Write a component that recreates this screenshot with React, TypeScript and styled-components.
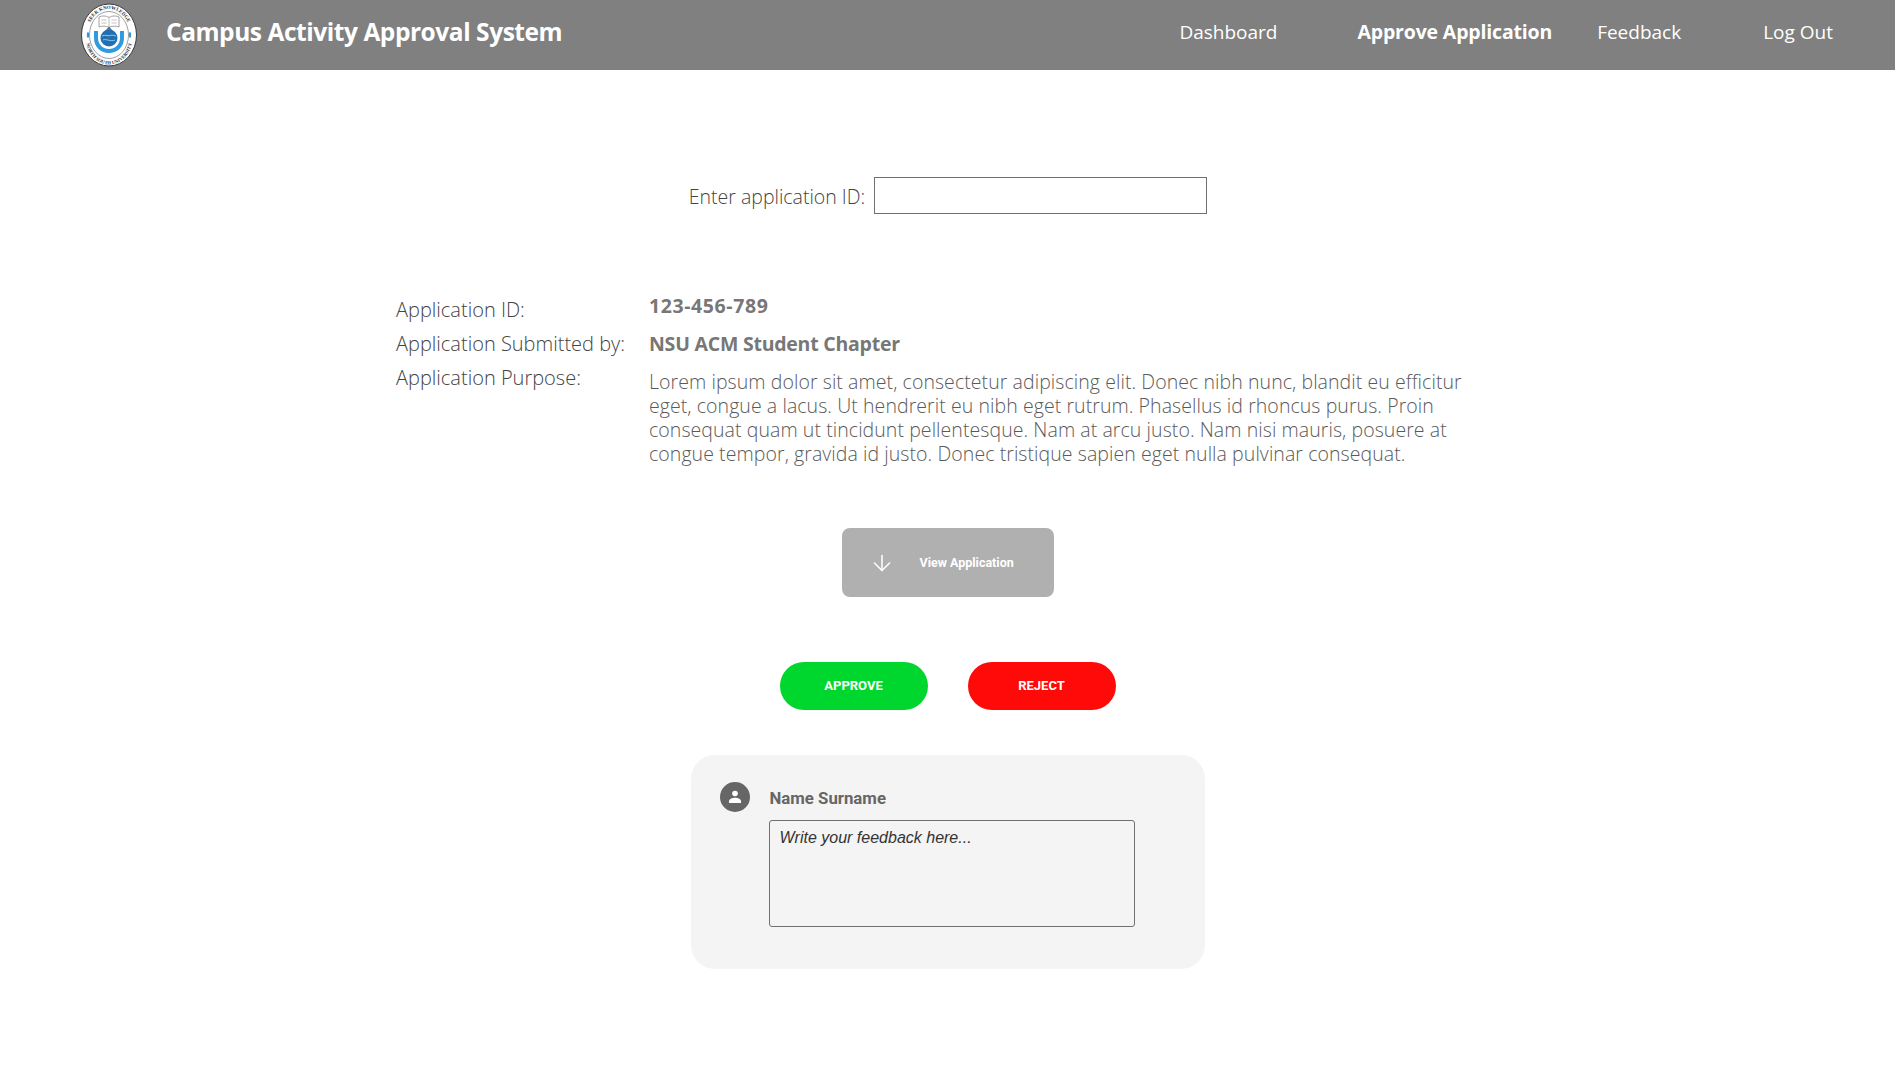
import React from "react";
import styled, { createGlobalStyle } from "styled-components";
import { ArrowDown } from "lucide-react";

const Global = createGlobalStyle`
  html, body { margin: 0; padding: 0; background: #fff; }
  * { box-sizing: border-box; }
  body { font-family: "Open Sans", "Noto Sans", sans-serif; }
`;
const Page = styled.div`
  min-height: 1066px;
  display: flex;
  flex-direction: column;
`;
const Header = styled.header`
  height: 70px;
  background: #808080;
  display: flex;
  align-items: center;
  padding-left: 81px;
  color: #fff;
`;
const Logo = styled.svg`
  width: 56px;
  height: 64px;
  flex: none;
`;
const Title = styled.h1`
  margin: -7px 0 0 29px;
  font-size: 24.5px;
  font-weight: 700;
  letter-spacing: -0.45px;
  white-space: nowrap;
`;
const Nav = styled.nav`
  margin-left: auto;
  margin-right: 62px;
  margin-top: -7px;
  display: flex;
  align-items: center;
`;
const NavLink = styled.a<{ $before: number; $active?: boolean }>`
  margin-left: ${(p) => p.$before}px;
  font-size: ${(p) => (p.$active ? "19.5px" : "19px")};
  font-weight: ${(p) => (p.$active ? 700 : 400)};
  letter-spacing: ${(p) => (p.$active ? "-0.17px" : "0")};
  white-space: nowrap;
  color: #fff;
`;
const Main = styled.main`
  display: flex;
  flex-direction: column;
  align-items: center;
`;
const SearchRow = styled.div`
  margin-top: 107px;
  margin-left: 1px;
  display: flex;
  align-items: center;
  gap: 9px;
`;
const Label = styled.label`
  padding-top: 2px;
  font-size: 19.5px;
  font-weight: 300;
  color: #444;
  white-space: nowrap;
`;
const IdInput = styled.input`
  width: 333px;
  height: 37px;
  border: 1px solid #707070;
  background: #fff;
  outline: none;
`;
const Details = styled.section`
  width: 1103px;
  margin-top: 79px;
  display: grid;
  grid-template-columns: 253px 830px;
  grid-auto-rows: auto;
`;
const RowLabel = styled.div<{ $top: number }>`
  font-size: 20px;
  font-weight: 300;
  line-height: 34px;
  height: 34px;
  color: #444;
  white-space: nowrap;
  margin-top: ${(p) => p.$top}px;
`;
const RowValue = styled.div<{ $top: number; $spacing: number }>`
  font-size: 19.5px;
  font-weight: 700;
  letter-spacing: ${(p) => p.$spacing}px;
  line-height: 34px;
  height: 34px;
  color: #777;
  margin-top: ${(p) => p.$top}px;
`;
const Purpose = styled.p`
  margin: 9px 0 0;
  font-size: 19.5px;
  font-weight: 300;
  letter-spacing: 0.07px;
  line-height: 24px;
  color: #5a5a5a;
`;
const ViewButton = styled.button`
  width: 212px;
  height: 69px;
  margin-top: 62px;
  border: 0;
  border-radius: 8px;
  background: #b0b0b0;
  color: #fff;
  display: flex;
  align-items: center;
  padding: 0 0 0 27px;
  font-family: Roboto, sans-serif;
  font-size: 12.5px;
  font-weight: 700;
  svg { flex: none; }
  span { margin-left: 25px; }
`;
const Actions = styled.div`
  margin-top: 65px;
  display: flex;
  gap: 40px;
`;
const Pill = styled.button<{ $bg: string }>`
  width: 148px;
  height: 48px;
  border: 0;
  border-radius: 24px;
  background: ${(p) => p.$bg};
  color: #fff;
  font-family: Roboto, sans-serif;
  font-size: 13px;
  font-weight: 700;
  padding-bottom: 2px;
`;
const Card = styled.section`
  width: 514px;
  height: 214px;
  margin-top: 45px;
  border-radius: 24px;
  background: #f4f4f4;
  padding: 27px 0 0 29px;
  display: grid;
  grid-template-columns: 30px 366px;
  column-gap: 19px;
  grid-template-rows: 30px auto;
  row-gap: 8px;
`;
const Avatar = styled.div`
  width: 30px;
  height: 30px;
  border-radius: 50%;
  background: #666;
  display: flex;
  align-items: center;
  justify-content: center;
`;
const Name = styled.div`
  font-family: Roboto, sans-serif;
  font-size: 16.8px;
  font-weight: 700;
  color: #666;
  line-height: 32px;
  padding-left: 1px;
`;
const Feedback = styled.textarea`
  grid-column: 2;
  width: 366px;
  height: 107px;
  border: 1px solid #707070;
  border-radius: 3px;
  background: transparent;
  padding: 8px 9px 8px 10px;
  font-family: "Liberation Sans", Arial, sans-serif;
  font-style: italic;
  font-size: 16px;
  line-height: 18px;
  resize: none;
  outline: none;
  &::placeholder { color: #333; opacity: 1; }
`;

function UniversityLogo() {
  return (
    <Logo viewBox="0 0 56 64" aria-hidden="true">
      <defs>
        <path id="ringTop" d="M6.5 32 A21.5 26 0 0 1 49.5 32" />
        <path id="ringBottom" d="M4.5 34 A23.5 27.5 0 0 0 51.5 34" />
      </defs>
      <ellipse cx="28" cy="32" rx="27.5" ry="31" fill="#fff" stroke="#3a3a3a" strokeWidth="1" />
      <ellipse cx="28" cy="32" rx="19.5" ry="23.5" fill="#fff" stroke="#777" strokeWidth="0.7" />
      <text fontFamily="Liberation Serif, serif" fontSize="5" fontWeight="700" fill="#333">
        <textPath href="#ringTop" startOffset="50%" textAnchor="middle">SEEK KNOWLEDGE</textPath>
      </text>
      <text fontFamily="Liberation Serif, serif" fontSize="4.8" fontWeight="700" fill="#333">
        <textPath href="#ringBottom" startOffset="50%" textAnchor="middle">NORTH SOUTH UNIVERSITY</textPath>
      </text>
      <path d="M18 14 C21 12.5 25 12.5 28 14.500 C31 12.5 35 12.5 38 14 V24 C35 22.800 31 22.800 28 24.500 C25 22.800 21 22.800 18 24 Z" fill="#fff" stroke="#9a9a9a" strokeWidth="0.9" />
      <path d="M28 14.500 V24.500 M20.500 17 H25.500 M20.500 20 H25.500 M30.500 17 H35.500 M30.500 20 H35.500" stroke="#aaa" strokeWidth="0.7" />
      <path d="M13 28 V35 C13 44 20 50 28 50 C36 50 43 44 43 35 V28 H39 V35 C39 41.500 34 46 28 46 C22 46 17 41.500 17 35 V28 Z" fill="#2d9be0" />
      <circle cx="28" cy="35" r="8.500" fill="#1f6fb2" />
      <path d="M21 33 C25 31 27 34 31 32 L35 33 M22 37 C25 35.500 30 39 34 37" stroke="#9fd0ee" strokeWidth="0.9" fill="none" />
      <path d="M25 27 L28 23.500 L31 27 Z" fill="#58708a" />
      <ellipse cx="7" cy="32" rx="1.200" ry="3" fill="#2d9be0" />
      <ellipse cx="49" cy="32" rx="1.200" ry="3" fill="#2d9be0" />
    </Logo>
  );
}

export default function App() {
  return (
    <Page>
      <Global />
      <Header>
        <UniversityLogo />
        <Title>Campus Activity Approval System</Title>
        <Nav>
          <NavLink $before={0}>Dashboard</NavLink>
          <NavLink $before={80} $active>Approve Application</NavLink>
          <NavLink $before={45}>Feedback</NavLink>
          <NavLink $before={82}>Log Out</NavLink>
        </Nav>
      </Header>
      <Main>
        <SearchRow>
          <Label htmlFor="app-id">Enter application ID:</Label>
          <IdInput id="app-id" />
        </SearchRow>
        <Details>
          <RowLabel $top={0}>Application ID:</RowLabel>
          <RowValue $top={-4} $spacing={0.6}>123-456-789</RowValue>
          <RowLabel $top={0}>Application Submitted by:</RowLabel>
          <RowValue $top={0} $spacing={-0.23}>NSU ACM Student Chapter</RowValue>
          <RowLabel $top={0}>Application Purpose:</RowLabel>
          <Purpose>
            Lorem ipsum dolor sit amet, consectetur adipiscing elit. Donec nibh nunc, blandit eu efficitur eget, congue a lacus. Ut hendrerit eu nibh eget rutrum. Phasellus id rhoncus purus. Proin consequat quam ut tincidunt pellentesque. Nam at arcu justo. Nam nisi mauris, posuere at congue tempor, gravida id justo. Donec tristique sapien eget nulla pulvinar consequat.
          </Purpose>
        </Details>
        <ViewButton>
          <ArrowDown size={26} strokeWidth={1.4} />
          <span>View Application</span>
        </ViewButton>
        <Actions>
          <Pill $bg="#00d72e">APPROVE</Pill>
          <Pill $bg="#ff0909">REJECT</Pill>
        </Actions>
        <Card>
          <Avatar>
            <svg width="16" height="16" viewBox="0 0 16 16" aria-hidden="true">
              <circle cx="8" cy="4.500" r="2.800" fill="#fff" />
              <path d="M2 14 V12.500 C2 10 5 8.800 8 8.800 C11 8.800 14 10 14 12.500 V14 Z" fill="#fff" />
            </svg>
          </Avatar>
          <Name>Name Surname</Name>
          <Feedback placeholder="Write your feedback here..." />
        </Card>
      </Main>
    </Page>
  );
}
